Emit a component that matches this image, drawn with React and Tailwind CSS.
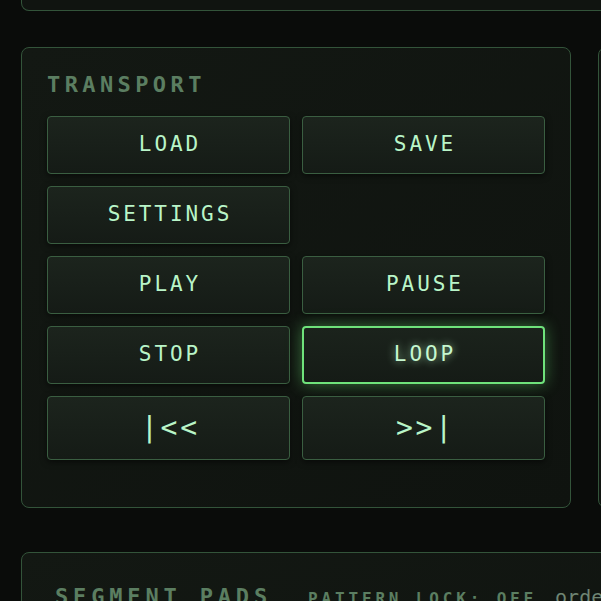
const mono = { fontFamily: '"DejaVu Sans Mono", "Liberation Mono", monospace' };

const buttons = [
  { label: "LOAD" },
  { label: "SAVE" },
  { label: "SETTINGS" },
  null,
  { label: "PLAY" },
  { label: "PAUSE" },
  { label: "STOP" },
  { label: "LOOP", active: true },
  { label: "|<<", big: true },
  { label: ">>|", big: true },
];

function TransportButton({ label, active, big }) {
  let cls =
    "flex items-center justify-center rounded-[4px] bg-gradient-to-b from-[#1c241d] to-[#151b16] text-[#b9f5c8] shadow-[0_2px_6px_rgba(0,0,0,0.55)]";
  if (big) {
    cls += " h-[64px] text-[28px] tracking-[0.1em] border border-[#3a5e41]";
  } else {
    cls += " h-[58px] pb-[1px] text-[21px] tracking-[0.14em] border border-[#3a5e41]";
  }
  if (active) {
    cls =
      "flex items-center justify-center rounded-[4px] bg-gradient-to-b from-[#1b231c] to-[#151b16] h-[58px] pb-[1px] text-[21px] tracking-[0.14em] border-2 border-[#6fe27b] text-[#c6f7cf] shadow-[0_0_16px_rgba(100,220,110,0.45)] [text-shadow:0_0_8px_rgba(190,255,200,0.75)]";
  }
  return (
    <button className={cls} style={mono}>
      <span className="pl-[0.14em]">{label}</span>
    </button>
  );
}

export default function App() {
  return (
    <div
      className="w-[601px] h-[601px] overflow-hidden bg-[#0a0c0a] pl-[21px]"
      style={mono}
    >
      {/* top panel (scrolled off) */}
      <div className="h-[11px] w-[700px] rounded-b-lg border-x border-b border-[#33543a] bg-[#101410]" />

      <div className="mt-[36px] flex gap-[27px]">
        {/* transport */}
        <div className="w-[550px] h-[461px] shrink-0 rounded-lg border border-[#33543a] bg-gradient-to-br from-[#131813] to-[#0f130f] px-[25px] pt-[26px]">
          <h2 className="text-[22px] leading-none font-bold tracking-[0.2em] text-[#5b7e61]">
            TRANSPORT
          </h2>
          <div className="mt-[20px] grid grid-cols-2 gap-x-[12px] gap-y-[12px]">
            {buttons.map((b, i) =>
              b ? <TransportButton key={i} {...b} /> : <div key={i} />
            )}
          </div>
        </div>

        {/* next panel */}
        <div className="w-[300px] h-[461px] shrink-0 rounded-lg border border-[#33543a] bg-[#101410]" />
      </div>

      {/* segment pads */}
      <div className="mt-[44px] w-[700px] h-[200px] rounded-lg border border-[#33543a] bg-gradient-to-br from-[#131813] to-[#0f130f] pl-[33px] pt-[27px]">
        <div className="flex items-baseline whitespace-nowrap">
          <h2 className="text-[22px] font-bold tracking-[0.22em] text-[#5b7e61]">
            SEGMENT PADS
          </h2>
          <span className="ml-[36px] text-[16px] font-bold tracking-[0.24em] text-[#5b7e61]">
            PATTERN LOCK: OFF
          </span>
          <span className="ml-[18px] text-[20px] text-[#6f8573]">
            order: sequential
          </span>
        </div>
      </div>
    </div>
  );
}
